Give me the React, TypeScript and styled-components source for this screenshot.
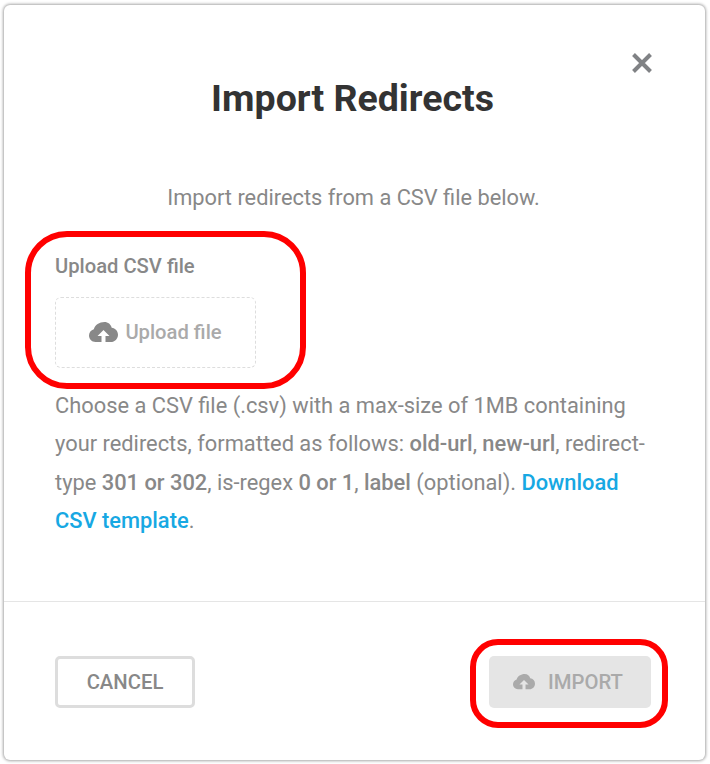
import React from 'react';
import styled, { createGlobalStyle } from 'styled-components';

const GlobalStyle = createGlobalStyle`
  html, body {
    margin: 0;
    padding: 0;
    background: #fff;
    font-family: Roboto, "Liberation Sans", sans-serif;
  }
`;

const CloudIcon = ({ size }: { size: number }) => (
  <svg width={size} height={size * 0.69} viewBox="0 0 29 20" fill="currentColor">
    <path
      fillRule="evenodd"
      d="M15.500 0c3.500 0 6.400 2.400 7.200 5.700 3.600.4 6.300 3.300 6.300 7 0 4-3.200 7.300-7.200 7.300H6.500C2.900 20 0 17.100 0 13.500c0-3 2-5.500 4.800-6.300C6 3 10.300 0 15.500 0zM14.500 8l-6 6h4v6h4v-6h4z"
    />
  </svg>
);

const App = () => (
  <Page>
    <GlobalStyle />
    <Modal>
      <CloseButton aria-label="Close">
        <svg width="20" height="20" viewBox="0 0 20 20" stroke="currentColor" strokeWidth="4" fill="none">
          <path d="M1.500 1.500l17 17M18.500 1.500l-17 17" />
        </svg>
      </CloseButton>
      <Content>
        <Title>Import Redirects</Title>
        <Intro>Import redirects from a CSV file below.</Intro>
        <FieldLabel>Upload CSV file</FieldLabel>
        <UploadBox>
          <CloudIcon size={29} />
          <span>Upload file</span>
        </UploadBox>
        <Help>
          Choose a CSV file (.csv) with a max-size of 1MB containing your redirects, formatted as
          follows: <strong>old-url</strong>, <strong>new-url</strong>, redirect-type{' '}
          <strong>301 or 302</strong>, is-regex <strong>0 or 1</strong>, <strong>label</strong>{' '}
          (optional). <HelpLink href="#">Download CSV template</HelpLink>.
        </Help>
      </Content>
      <Footer>
        <CancelButton>CANCEL</CancelButton>
        <ImportButton disabled>
          <CloudIcon size={22} />
          <span>IMPORT</span>
        </ImportButton>
      </Footer>
      <UploadHighlight />
      <ImportHighlight />
    </Modal>
  </Page>
);

const Page = styled.div`
  width: 710px;
  height: 764px;
  padding: 5px 5px 4px 4px;
  box-sizing: border-box;
  overflow: hidden;
`;

const Modal = styled.div`
  position: relative;
  height: 755px;
  display: flex;
  flex-direction: column;
  box-sizing: border-box;
  background: #fff;
  border-radius: 6px;
  box-shadow: 0 0 3px 1px rgba(0, 0, 0, 0.35);
`;

const CloseButton = styled.button`
  position: absolute;
  top: 48px;
  right: 53px;
  padding: 0;
  display: flex;
  border: 0;
  background: none;
  color: #808285;
`;

const Content = styled.div`
  flex: 1;
  padding: 68px 53px 0 51px;
`;

const Title = styled.h1`
  margin: 0 2px 0 0;
  font-size: 37.500px;
  line-height: 50px;
  font-weight: 700;
  color: #333;
  text-align: center;
`;

const Intro = styled.p`
  margin: 56px 0 0;
  font-size: 21.800px;
  line-height: 38px;
  color: #888;
  text-align: center;
`;

const FieldLabel = styled.div`
  margin-top: 36px;
  font-size: 20.200px;
  line-height: 26px;
  font-weight: 500;
  color: #888;
`;

const UploadBox = styled.div`
  margin-top: 18px;
  width: 201px;
  height: 71px;
  box-sizing: border-box;
  display: flex;
  align-items: center;
  justify-content: center;
  gap: 7px;
  padding-bottom: 2px;
  border: 1px dashed #ddd;
  border-radius: 6px;
  color: #888;
  span {
    font-size: 20.200px;
    font-weight: 500;
    color: #aaa;
  }
`;

const Help = styled.p`
  margin: 19px 0 0;
  font-size: 21.850px;
  line-height: 38.300px;
  color: #888;
  strong {
    font-weight: 500;
  }
`;

const HelpLink = styled.a`
  color: #17a8e3;
  font-weight: 500;
  text-decoration: none;
`;

const Footer = styled.div`
  height: 159px;
  box-sizing: border-box;
  display: flex;
  align-items: flex-start;
  justify-content: space-between;
  padding: 54px 54px 0 51px;
  border-top: 1px solid #e5e5e5;
`;

const FooterButton = styled.button`
  height: 52px;
  box-sizing: border-box;
  display: flex;
  align-items: center;
  justify-content: center;
  border-radius: 5px;
  font-family: inherit;
  font-size: 20.300px;
  font-weight: 500;
`;

const CancelButton = styled(FooterButton)`
  width: 140px;
  border: 3px solid #ddd;
  background: #fff;
  color: #888;
`;

const ImportButton = styled(FooterButton)`
  width: 162px;
  gap: 13px;
  padding: 0 4px 0 0;
  border: 0;
  background: #e5e5e5;
  color: #aaa;
`;

const Highlight = styled.div`
  position: absolute;
  box-sizing: border-box;
  border: 6px solid #f00;
`;

const UploadHighlight = styled(Highlight)`
  left: 21px;
  top: 226px;
  width: 281px;
  height: 158px;
  border-radius: 42px;
`;

const ImportHighlight = styled(Highlight)`
  left: 466px;
  top: 634px;
  width: 198px;
  height: 89px;
  border-radius: 28px;
`;

export default App;
